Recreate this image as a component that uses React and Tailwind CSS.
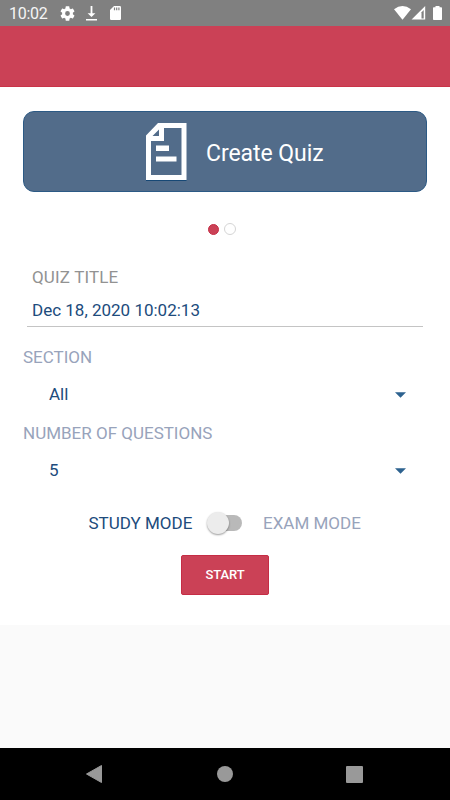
function StatusBar() {
  return (
    <div className="flex h-[26px] items-center justify-between bg-[#808080] text-white">
      <div className="flex items-center pl-[9px]">
        <span className="w-[51px] pt-[1px] text-[16px] leading-[26px] tracking-[-0.3px] text-[#f5f5f5]">10:02</span>
        <svg width="15" height="15" viewBox="2 2 20 20" fill="currentColor">
          <path d="M19.14 12.94c.04-.3.06-.61.06-.94s-.02-.64-.07-.94l2.03-1.58a.49.49 0 0 0 .12-.61l-1.92-3.32a.49.49 0 0 0-.59-.22l-2.39.96a7 7 0 0 0-1.62-.94l-.36-2.54A.48.48 0 0 0 13.92 2.4h-3.84a.48.48 0 0 0-.47.41l-.36 2.54c-.59.24-1.13.57-1.62.94l-2.39-.96a.48.48 0 0 0-.59.22L2.74 8.87a.47.47 0 0 0 .12.61l2.03 1.58a6 6 0 0 0 0 1.88l-2.03 1.58a.49.49 0 0 0-.12.61l1.92 3.32c.12.22.37.29.59.22l2.39-.96c.5.38 1.03.7 1.62.94l.36 2.54c.05.24.24.41.48.41h3.84c.24 0 .44-.17.47-.41l.36-2.54c.59-.24 1.13-.56 1.62-.94l2.39.96c.22.08.47 0 .59-.22l1.92-3.32a.49.49 0 0 0-.12-.61zM12 15.2a3.2 3.2 0 1 1 0-6.4 3.2 3.2 0 0 1 0 6.4z" />
        </svg>
        <svg className="ml-[11px]" width="11" height="15" viewBox="0 0 11 15" fill="currentColor">
          <path d="M4.600 0h1.800v7.200h3L5.500 11 1.600 7.200h3zM0 13h11v1.500H0z" />
        </svg>
        <svg className="ml-[13px]" width="11" height="14" viewBox="0 0 11 14">
          <path d="M4 0h5.800Q11 0 11 1.200v11.600Q11 14 9.800 14H1.200Q0 14 0 12.800V4z" fill="currentColor" />
          <path d="M4.500 1.600v2.700M6.700 1.600v2.700M8.900 1.600v2.700" stroke="#808080" strokeWidth="1.200" />
        </svg>
      </div>
      <div className="flex items-center pr-[8px]">
        <svg width="17" height="14" viewBox="0 0 17 14" fill="currentColor">
          <path d="M0 3.200Q8.500-3.200 17 3.200L8.500 13.700z" />
        </svg>
        <svg width="15" height="14" viewBox="0 0 15 14">
          <path d="M14.200 0v13.600H.6z" fill="currentColor" />
          <path d="M12.700 4v8.400h-2.200V6.200z" fill="#808080" />
        </svg>
        <svg className="ml-[7px]" width="9" height="14" viewBox="0 0 9 14" fill="currentColor">
          <path d="M2.500 0h4v1.300h1.700q.8 0 .8.800v11.100q0 .8-.8.800H.8q-.8 0-.8-.8V2.100q0-.8.8-.8h1.700z" />
        </svg>
      </div>
    </div>
  );
}

function Select({ label, value }) {
  return (
    <div className="h-[76px] px-[23px]">
      <div className="h-[38px] text-[17px] leading-[38px] text-[#98a3bb]">{label}</div>
      <div className="flex h-[38px] items-center justify-between pr-[21px] pl-[26px] text-[17px] text-[#204b7c]">
        <span>{value}</span>
        <svg width="11" height="6" viewBox="0 0 11 6">
          <path d="M0 .2h11L5.500 5.700z" fill="#2d628f" />
        </svg>
      </div>
    </div>
  );
}

export default function App() {
  return (
    <div className="flex h-[800px] w-[450px] flex-col overflow-hidden bg-[#fafafa] font-['Roboto',sans-serif]">
      <StatusBar />
      <header className="h-[61px] border-b border-[#c93448] bg-[#cb4156]" />
      <main className="flex h-[538px] flex-col bg-white pt-[24px]">
        <div className="mx-[23px] flex h-[81px] shrink-0 items-center rounded-[11px] border border-[#2c5a85] bg-[#526c8a] pl-[122px] text-white">
          <svg width="41" height="58" viewBox="0 0 41 58">
            <path d="M12 0h28.500v57H0V12.500zM18 5v13H5v34h30.500V5zM13 6.500L6.500 13H13z" fill="#fff" fillRule="evenodd" />
            <path d="M10 22.500h13v5.500H10zM10 33.500h20.500v5H10z" fill="#fff" />
            <path d="M0 57.500h40.500" stroke="#174875" />
          </svg>
          <span className="ml-[19px] pt-[4px] text-[23px] leading-[30px] tracking-[-0.050px]">Create Quiz</span>
        </div>
        <div className="flex h-[74px] shrink-0 items-center justify-center gap-[5px] pr-[6px]">
          <span className="size-[11px] rounded-full border border-[#c52d45] bg-[#cb4156]" />
          <span className="size-[12px] rounded-full border border-[#d5d5d5] bg-white" />
        </div>
        <div className="mx-[27px] h-[61px] shrink-0 border-b border-[#c4c4c4] pl-[5px] text-[17px]">
          <div className="h-[22px] leading-[22px] tracking-[0.150px] text-[#929292]">QUIZ TITLE</div>
          <div className="h-[37px] pt-[6px] leading-[32px] text-[#204b7c]">Dec 18, 2020 10:02:13</div>
        </div>
        <div className="h-[11px] shrink-0" />
        <Select label="SECTION" value="All" />
        <Select label="NUMBER OF QUESTIONS" value="5" />
        <div className="mt-[13px] flex h-[39px] shrink-0 items-center pl-[88.500px] text-[17px] leading-[38px]">
          <span className="w-[118.500px] text-[#204b7c]">STUDY MODE</span>
          <span className="flex h-[16px] w-[35px] items-center rounded-full bg-gradient-to-r from-transparent from-50% to-[#b9b9b9] to-50%">
            <span className="size-[22px] shrink-0 rounded-full bg-[#ececec] shadow-[0_1px_2px_rgba(0,0,0,0.4)]" />
          </span>
          <span className="ml-[21px] text-[#98a3bb]">EXAM MODE</span>
        </div>
        <button className="mt-[13px] ml-[181px] h-[40px] w-[88px] shrink-0 rounded-[2px] border border-[#c52d45] bg-[#cb4156] text-[13px] font-medium tracking-[-0.100px] text-white">
          START
        </button>
      </main>
      <div className="h-[123px]" />
      <nav className="flex h-[52px] items-center bg-black">
        <svg className="ml-[86px]" width="16" height="18" viewBox="0 0 16 18">
          <path d="M15.500.5v17L.5 9z" fill="#999" stroke="#999" strokeLinejoin="round" />
        </svg>
        <span className="ml-[115px] size-[16px] rounded-full bg-[#999]" />
        <span className="ml-[113px] size-[17px] rounded-[1px] bg-[#999]" />
      </nav>
    </div>
  );
}
